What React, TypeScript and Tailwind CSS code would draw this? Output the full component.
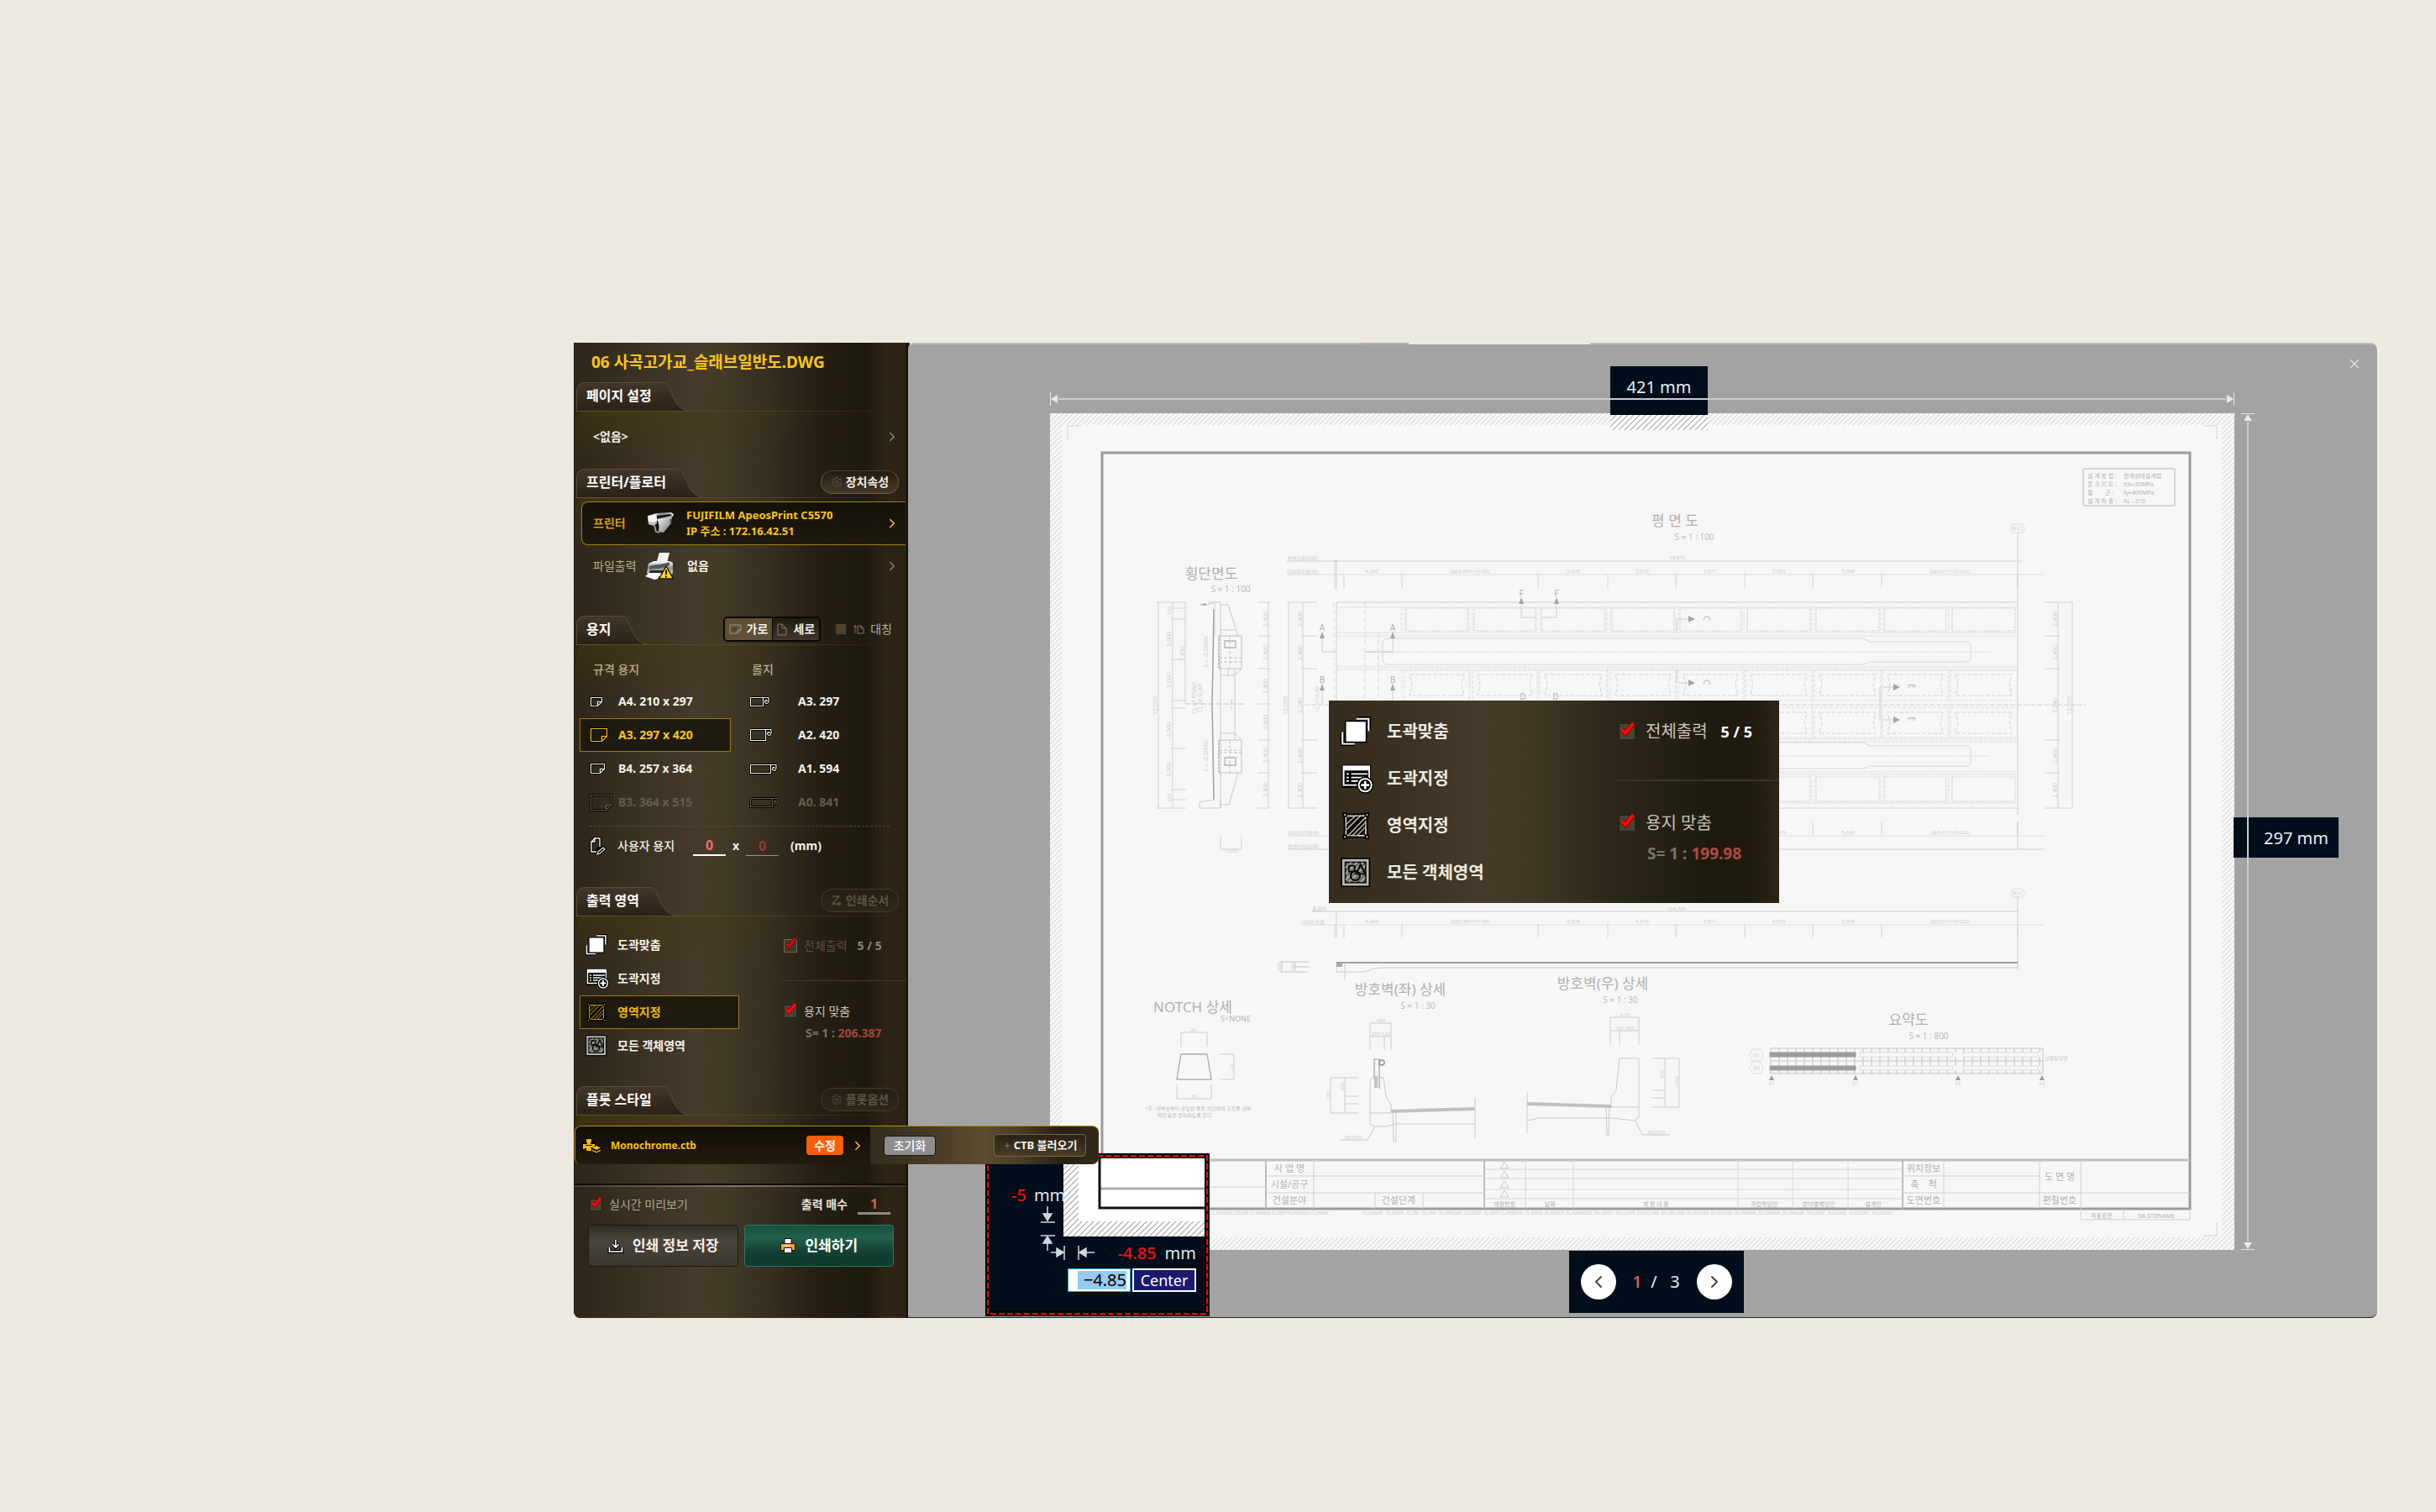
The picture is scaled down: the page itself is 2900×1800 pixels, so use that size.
import React, { useId, useState } from "react";
import { ChevronLeft, ChevronRight, Plus, Settings, X } from "lucide-react";

/* ------------------------------------------------------------------ */
/* Icons                                                               */
/* ------------------------------------------------------------------ */

function PaperIcon({ w, h }: { w: number; h: number }) {
  const f = h > 14 ? 6 : 5;
  const body = `M1.5 1.5H${w + 1.5}V${h + 1.5 - f}L${w + 1.5 - f} ${h + 1.5}H1.5Z`;
  const fold = `M${w + 1.5 - f} ${h + 1.5}V${h + 1.5 - f}H${w + 1.5}`;
  return (
    <svg width={w + 3} height={h + 3} viewBox={`0 0 ${w + 3} ${h + 3}`} fill="none" aria-hidden="true">
      <path d={body} stroke="#000" strokeWidth="3" />
      <path d={body + fold} stroke="currentColor" strokeWidth="1.2" />
    </svg>
  );
}

function RollIcon({ w, h }: { w: number; h: number }) {
  const outline = `M1.5 1.5H${w + 8}M1.5 1.5V${h + 1.5}H${w + 1.5}V1.5`;
  const curl = `M${w + 8} 1.5V5.500Q${w + 7.5} 8.500 ${w + 5.5} 8.500Q${w + 3.5} 8.200 ${w + 3.5} 6Q${w + 3.8} 4.200 ${w + 5.8} 4.500V6`;
  return (
    <svg width={w + 11} height={h + 3} viewBox={`0 0 ${w + 11} ${h + 3}`} fill="none" aria-hidden="true">
      <path d={outline + curl} stroke="#000" strokeWidth="3" />
      <path d={outline + curl} stroke="currentColor" strokeWidth="1.200" />
    </svg>
  );
}

function PlotterIcon() {
  return (
    <svg viewBox="0 0 34 28" className="h-7 w-[34px]" aria-hidden="true">
      <defs>
        <linearGradient id="plotPaper" x1="0" y1="0" x2="1" y2="1">
          <stop offset="0" stopColor="#fff" />
          <stop offset=".5" stopColor="#b8b8b8" />
          <stop offset="1" stopColor="#5d5d5d" />
        </linearGradient>
        <linearGradient id="plotBar" x1="0" y1="0" x2="1" y2="0">
          <stop offset="0" stopColor="#f4f4f4" />
          <stop offset=".5" stopColor="#8d8d8d" />
          <stop offset="1" stopColor="#e2e2e2" />
        </linearGradient>
      </defs>
      <path d="M11 24l14 1 7-7-3-3z" fill="#17130c" />
      <path d="M3 5l8-3 18-1 3 2-1 3-19 5-8-1z" fill="url(#plotBar)" />
      <path d="M11 5l16-2 3 1-3 3-15 3z" fill="#1c1c1c" />
      <path d="M12 9l18-4-1 9-9 11-6-1c1-5 1-10-2-15z" fill="url(#plotPaper)" />
      <path d="M1 5l9-2 2 3v7l-4 3-6-1z" fill="#f4f4f4" />
      <path d="M2 12l6 1 4-2v3l-4 3-6-2z" fill="#bdbdbd" />
      <path d="M9 16l2 8 4 1" fill="none" stroke="#a5a5a5" strokeWidth="1.600" />
      <path d="M28 9l1 6" fill="none" stroke="#4a4a4a" strokeWidth="1.400" />
    </svg>
  );
}

function FilePrinterIcon() {
  return (
    <svg viewBox="0 0 34 34" className="h-[34px] w-[34px]" aria-hidden="true">
      <defs>
        <linearGradient id="filePrinter" x1="0" y1="0" x2="0" y2="1">
          <stop offset="0" stopColor="#fff" />
          <stop offset=".45" stopColor="#8d9194" />
          <stop offset="1" stopColor="#e7e7e7" />
        </linearGradient>
      </defs>
      <path d="M17 1h12l-3 13H13z" fill="#f5f5f5" />
      <path d="M4 14l6-3h19l4 2v12l-4 4H6l-4-4z" fill="url(#filePrinter)" />
      <path d="M5 17c7-2 17-2 24-5v4c-7 4-17 4-24 5z" fill="#54595c" />
      <path d="M6 22h16v4H4z" fill="#2b2b2b" />
      <path d="M5 25h14l-4 7-4 1-11-4z" fill="#fbfbfb" />
      <path d="M25 17l8.500 15h-17z" fill="#ffd21f" stroke="#1b1500" strokeWidth="1.400" strokeLinejoin="round" />
      <path d="M25 21.500v5.500M25 28.600v1.800" stroke="#000" strokeWidth="1.800" />
    </svg>
  );
}

function LandscapeIcon() {
  return (
    <svg width="15" height="12" viewBox="0 0 15 12" fill="none" stroke="#a1957f" aria-hidden="true">
      <path d="M1 1h13v6l-4 4H1zM10 11V7h4" />
      <path d="M4 8l3-3 2 1" stroke="#2a2317" />
    </svg>
  );
}

function PortraitIcon() {
  return (
    <svg width="12" height="15" viewBox="0 0 12 15" fill="none" stroke="#8a806d" aria-hidden="true">
      <path d="M1 1h5l5 5v8H1zM6 1v5h5" />
    </svg>
  );
}

function MirrorIcon() {
  return (
    <svg width="14" height="14" viewBox="0 0 14 14" fill="none" stroke="#7d735f" aria-hidden="true">
      <path d="M5 3h4l3 3v6H5zM9 3v3h3M2 12V3M.5 4.500L2 2.500l1.500 2" />
    </svg>
  );
}

function CustomPaperIcon() {
  return (
    <svg width="20" height="22" viewBox="0 0 20 22" fill="none" aria-hidden="true">
      <path d="M6 2h6v10l-5 6H2V6zM6 2v4H2M10 19l6-6 2 2-6 5-3 1z" stroke="#000" strokeWidth="3.500" />
      <path d="M6 2h6v10M8 18H2V6l4-4v4H2" stroke="#f2f0ea" strokeWidth="1.400" />
      <path d="M10 18l6-5 2 2-6 5-3 1z" stroke="#f2f0ea" strokeWidth="1.200" />
    </svg>
  );
}

type ActionKind = "fit" | "pick" | "area" | "all";

function ActionIcon({ kind, className }: { kind: ActionKind; className: string }) {
  if (kind === "fit")
    return (
      <svg viewBox="0 0 28 26" className={className} fill="none" aria-hidden="true">
        <path d="M14 2h10v10M1.500 14v9.500H12" stroke="#000" strokeWidth="4" />
        <path d="M13.500 2H24v10.500M1.500 13.500v10H12" stroke="#fff" strokeWidth="1.500" />
        <path d="M4 4h18v18H4z" fill="#fff" stroke="#000" strokeWidth="1.200" />
      </svg>
    );
  if (kind === "pick")
    return (
      <svg viewBox="0 0 28 26" className={className} fill="none" aria-hidden="true">
        <path d="M1 1h25v20H1z" fill="#000" />
        <path d="M2.500 2.500h22v16h-22z" stroke="#fff" strokeWidth="1.400" />
        <path d="M2 2h23v4H2z" fill="#fff" />
        <path d="M5 9h2M9 9h14M5 12h2M9 12h12M5 15h2M9 15h6" stroke="#fff" strokeWidth="1.300" />
        <circle cx="21" cy="18.500" r="6.500" fill="#000" stroke="#000" strokeWidth="1.500" />
        <circle cx="21" cy="18.500" r="5.500" stroke="#fff" strokeWidth="1.400" />
        <path d="M21 15v7M17.500 18.500h7" stroke="#fff" strokeWidth="1.900" />
      </svg>
    );
  if (kind === "area")
    return (
      <svg viewBox="0 0 28 26" className={className} fill="none" aria-hidden="true">
        <path d="M4 4h18v18H4z" fill="#2b2417" stroke="#000" strokeWidth="3" />
        <path d="M5 12l8-8M4 20L20 4M8 22L22 8M14 22l8-8" stroke="#000" strokeWidth="3" />
        <path d="M4.500 5v7l8-7.500zM4.500 20.500V17L17 4.500h4.500v1L6.500 21.500zM21.500 21.500H14l7.500-7.500zM10 21.500L21.500 10" stroke="currentColor" strokeWidth="1" opacity=".8" />
        <path d="M4.500 4.500h17v17h-17z" stroke="currentColor" strokeWidth="1" strokeDasharray="6 1" opacity=".8" />
        <path d="M1.500 1.500h4v4h-4zM20.500 1.500h4v4h-4zM1.500 20.500h4v4h-4zM20.500 20.500h4v4h-4z" fill="#000" />
        <path d="M3 3h1.300v1.300H3zM22 3h1.300v1.300H22zM3 22h1.300v1.300H3zM22 22h1.300v1.300H22z" fill="currentColor" />
      </svg>
    );
  return (
    <svg viewBox="0 0 28 26" className={className} fill="none" aria-hidden="true">
      <rect x=".7" y=".7" width="24" height="24" fill="#b9b9b4" stroke="#000" strokeWidth="1.200" />
      <rect x="4" y="4" width="17.400" height="17.400" fill="#77756e" stroke="#111" strokeWidth="1.400" />
      <path d="M4 9l5-5M4 14L14 4M4 19L19 4M7 21L21 7M12 21l9-9M17 21l4-4" stroke="#cfcfc8" strokeWidth=".8" />
      <path d="M7 7h5v5H7z" stroke="#000" strokeWidth="1.300" />
      <circle cx="12.500" cy="15.500" r="4" stroke="#000" strokeWidth="1.500" />
      <path d="M17 6l4 8h-8z" stroke="#000" strokeWidth="1.400" />
    </svg>
  );
}

function StylePrinterIcon() {
  return (
    <svg width="24" height="20" viewBox="0 0 24 20" fill="#f3bd0c" aria-hidden="true">
      <path d="M5 2h6v5h4v6H11v2H5v-1H1V7h4z" stroke="#000" strokeWidth="2" />
      <path d="M5 2h6v4H5zM1 8h14v4H1zM1 12h2v2H1zM5 13h6v3H5z" />
      <path d="M4 9.500h8" stroke="#1a150a" />
      <path d="M17 9.500l6 3-1 3-5 3-5.500-3-.5-3z" fill="#000" />
      <path d="M17 10l5 2.500-5 2.500-5-2.500z" />
      <path d="M12 14.500l5 2.500 5-2.500v1.500L17 18.500 12 16z" />
    </svg>
  );
}

function SaveIcon() {
  return (
    <svg width="20" height="20" viewBox="0 0 20 20" fill="none" aria-hidden="true">
      <path d="M10 3v8M6.500 8.500L10 12l3.500-3.500M2.500 12v5h15v-5" stroke="#000" strokeWidth="4" />
      <path d="M10 3v8M6.500 8.500L10 12l3.500-3.500M2.500 12v5h15v-5" stroke="#fff" strokeWidth="1.600" />
    </svg>
  );
}

function PrintIcon() {
  return (
    <svg width="20" height="20" viewBox="0 0 20 20" stroke="#1b1408" aria-hidden="true">
      <path d="M6 1.500h8V8H6z" fill="#fff" />
      <path d="M1.500 7.500h17v8h-17z" fill="#eca23a" />
      <path d="M5.500 12.500h9v6h-9z" fill="#fff" />
      <path d="M5 10h7" stroke="#fff0c8" />
    </svg>
  );
}

/* ------------------------------------------------------------------ */
/* Small controls                                                      */
/* ------------------------------------------------------------------ */

function CheckField({
  label,
  boxClass,
  textClass,
  dim = false,
  initial = true,
}: {
  label: React.ReactNode;
  boxClass: string;
  textClass: string;
  dim?: boolean;
  initial?: boolean;
}) {
  const id = useId();
  const [on, setOn] = useState(initial);
  return (
    <div className={dim ? "flex items-center opacity-70" : "flex items-center"}>
      <span className={"relative mr-2 block " + boxClass}>
        <input
          id={id}
          type="checkbox"
          checked={on}
          onChange={(e) => setOn(e.target.checked)}
          className={"block h-full w-full appearance-none border bg-[#4b4330] " + (dim ? "border-[#8b8577]" : "border-[#15291f]")}
        />
        {on && (
          <svg viewBox="0 0 20 20" className="pointer-events-none absolute -top-1 left-0 h-full w-full overflow-visible" fill="none" aria-hidden="true">
            <path d="M3.500 11.500L8 16 17.500 4" stroke="#7d0505" strokeWidth="6" />
            <path d="M3.500 11.500L8 16 17.500 4" stroke="#f50d0d" strokeWidth="3.800" />
          </svg>
        )}
      </span>
      <label htmlFor={id} className={textClass}>
        {label}
      </label>
    </div>
  );
}

function PillButton({ children, icon, disabled = false }: { children: React.ReactNode; icon: React.ReactNode; disabled?: boolean }) {
  return (
    <button
      type="button"
      disabled={disabled}
      className="flex h-7 w-[93px] items-center justify-center gap-1 rounded-[14px] border border-[#6b5b35] border-t-[#4b4026] bg-linear-to-b from-[#221c11] to-[#46392a] text-sm font-bold text-[#efece4] disabled:border-[#453a24] disabled:from-[#241e13] disabled:to-[#2f2718] disabled:text-[#5d5443]"
    >
      {icon}
      {children}
    </button>
  );
}

function Section({
  title,
  extra,
  panelClass,
  children,
}: {
  title: string;
  extra?: React.ReactNode;
  panelClass: string;
  children?: React.ReactNode;
}) {
  return (
    <section className="pl-[3px]">
      <header className="flex h-[34px] items-stretch">
        <h2 className="flex items-center rounded-tl-[10px] border-t border-l border-[#5b4c33] bg-linear-to-b from-[#43372a] to-[#2a2216] pb-[3px] pl-[11px] text-base leading-5 font-bold text-white">
          {title}
        </h2>
        <svg width="44" height="34" viewBox="0 0 44 34" fill="none" aria-hidden="true">
          <defs>
            <linearGradient id="tabEnd" x1="0" y1="0" x2="0" y2="1">
              <stop offset="0" stopColor="#43372a" />
              <stop offset="1" stopColor="#2a2216" />
            </linearGradient>
          </defs>
          <path d="M0 .5H12C20 .5 21 7 24 14c4 10 9 19 20 20H0Z" fill="url(#tabEnd)" />
          <path d="M0 .5H12C20 .5 21 7 24 14c4 10 9 19 20 20" stroke="#5b4c33" />
        </svg>
        <div className="flex flex-1 items-center justify-end pr-[9px] pb-[2px]">{extra}</div>
      </header>
      <div className="h-px w-full bg-linear-to-r from-[#6b5322] via-[#54431f] to-transparent" />
      <div className={"rounded-tl-[10px] bg-[radial-gradient(ellipse_280px_60px_at_20px_0px,#4a380f80,transparent)] " + panelClass}>{children}</div>
    </section>
  );
}

const ACTIONS: { kind: ActionKind; label: string }[] = [
  { kind: "fit", label: "도곽맞춤" },
  { kind: "pick", label: "도곽지정" },
  { kind: "area", label: "영역지정" },
  { kind: "all", label: "모든 객체영역" },
];

const SHEETS = [
  { label: "A4. 210 x 297", w: 13, h: 10 },
  { label: "A3. 297 x 420", w: 19, h: 15 },
  { label: "B4. 257 x 364", w: 16, h: 11 },
  { label: "B3. 364 x 515", w: 24, h: 18, off: true },
];

const ROLLS = [
  { label: "A3. 297", w: 15, h: 10 },
  { label: "A2. 420", w: 18, h: 13 },
  { label: "A1. 594", w: 24, h: 10 },
  { label: "A0. 841", w: 26, h: 10, off: true },
];

function Sidebar() {
  return (
    <aside className="relative z-20 w-[398px] shrink-0 rounded-bl-lg border-r-2 border-[#120e06] bg-[linear-gradient(90deg,#2d2619_0%,#372f20_15%,#453b2a_36%,#433a27_44%,#373020_58%,#241e13_74%,#1f1a0f_88%,#2e2416_94%,#2b2214_100%)]">
      <h1 className="h-[47px] pl-[21px] text-[19px] leading-[46px] font-bold text-[#fac417]">06 사곡고가교_슬래브일반도.DWG</h1>

      <Section title="페이지 설정" panelClass="h-[68px] pt-[10px]">
        <button type="button" className="flex h-10 w-full items-center justify-between pr-2 pl-5 text-sm font-bold text-[#f1eee6]">
          &lt;없음&gt;
          <ChevronRight className="h-[18px] w-[18px] text-[#8f8878]" />
        </button>
      </Section>

      <Section
        title="프린터/플로터"
        panelClass="h-[140px] pt-1"
        extra={<PillButton icon={<Settings className="h-[14px] w-[14px] text-[#7b715e]" strokeWidth={1} />}>장치속성</PillButton>}
      >
        <button
          type="button"
          className="ml-[6px] flex h-[52px] w-[386px] items-center rounded-l-lg border border-r-0 border-[#a17c16] bg-linear-to-b from-[#14110a] via-[#1a150c] to-[#1f190e] pr-[7px] pl-[13px] text-left font-bold"
        >
          <span className="w-[60px] text-sm text-[#d49c10]">프린터</span>
          <span className="w-[51px] pl-1">
            <PlotterIcon />
          </span>
          <span className="flex-1 text-[13px] leading-[19px] text-[#fbc414]">
            FUJIFILM ApeosPrint C5570
            <br />
            IP 주소 : 172.16.42.51
          </span>
          <ChevronRight className="h-[18px] w-[18px] text-[#fbc414]" />
        </button>
        <button type="button" className="flex h-[50px] w-full items-center pr-2 pl-5 text-left text-sm">
          <span className="w-[62px] text-[#b9ad8c]">파일출력</span>
          <span className="w-[50px]">
            <FilePrinterIcon />
          </span>
          <span className="flex-1 font-bold text-[#f1eee6]">없음</span>
          <ChevronRight className="h-[18px] w-[18px] text-[#8f8878]" />
        </button>
      </Section>

      <Section
        title="용지"
        panelClass="h-[288px] pt-[18px] pl-1"
        extra={
          <div className="flex items-center pr-2">
            <div className="flex h-[30px] w-[116px] overflow-hidden rounded-[5px] border-2 border-[#0a0804] text-sm font-bold text-[#f1eee6]">
              <button type="button" className="flex flex-1 items-center justify-center gap-[6px] border-r border-[#0a0804] bg-[#5f4f39]">
                <LandscapeIcon />
                가로
              </button>
              <button type="button" className="flex flex-1 items-center justify-center gap-2 bg-linear-to-b from-[#221c11] to-[#41362a]">
                <PortraitIcon />
                세로
              </button>
            </div>
            <div className="pl-[17px]">
              <CheckField
                initial={false}
                boxClass="h-[14px] w-[14px]"
                textClass="flex items-center gap-[6px] text-sm text-[#b7b0a2]"
                label={
                  <>
                    <MirrorIcon />
                    대칭
                  </>
                }
              />
            </div>
          </div>
        }
      >
        <div className="flex gap-[22px]">
          <div className="w-[180px]">
            <h3 className="mb-[7px] pl-4 text-sm leading-[22px] font-medium text-[#b9ad8c]">규격 용지</h3>
            {SHEETS.map((s, i) => (
              <button
                key={s.label}
                type="button"
                disabled={s.off}
                aria-pressed={i === 1}
                className={
                  "flex h-10 w-full items-center border pl-[11px] text-sm font-bold " +
                  (i === 1 ? "border-[#9a7717] bg-[#1f1a10] text-[#fbc414]" : s.off ? "border-transparent text-[#655d4c]" : "border-transparent text-[#f4f1ea]")
                }
              >
                <span className="w-[34px]">
                  <PaperIcon w={s.w} h={s.h} />
                </span>
                {s.label}
              </button>
            ))}
          </div>
          <div className="flex-1">
            <h3 className="mb-[7px] pl-[3px] text-sm leading-[22px] font-medium text-[#b9ad8c]">롤지</h3>
            {ROLLS.map((s) => (
              <button
                key={s.label}
                type="button"
                disabled={s.off}
                className={"flex h-10 items-center text-sm font-bold " + (s.off ? "text-[#655d4c]" : "text-[#f4f1ea]")}
              >
                <span className="w-[58px]">
                  <RollIcon w={s.w} h={s.h} />
                </span>
                {s.label}
              </button>
            ))}
          </div>
        </div>
        <div className="mt-2 mr-5 ml-3 border-t border-dashed border-[#544a35]" />
        <div className="mt-[9px] flex h-7 items-center pl-3 text-sm font-bold text-[#f1eee6]">
          <CustomPaperIcon />
          <label htmlFor="custom-w" className="w-[103px] pl-[13px] font-medium whitespace-nowrap">
            사용자 용지
          </label>
          <input id="custom-w" defaultValue="0" className="h-6 w-[39px] border-b-2 border-white bg-transparent text-center text-base font-bold text-[#ee6a66]" />
          <label htmlFor="custom-h" className="px-2">
            x
          </label>
          <input id="custom-h" defaultValue="0" className="h-6 w-[39px] border-b border-[#9b9484] bg-transparent text-center text-base font-bold text-[#8f3f38]" />
          <span className="pl-[14px]">(mm)</span>
        </div>
      </Section>

      <Section
        title="출력 영역"
        panelClass="flex h-[202px] pt-[14px] pl-1"
        extra={
          <PillButton
            disabled
            icon={
              <svg width="14" height="14" viewBox="0 0 14 14" fill="none" stroke="currentColor" strokeWidth="1.300" aria-hidden="true">
                <path d="M2 2h8L2 11h9M9 9l3 2-3 2" />
              </svg>
            }
          >
            인쇄순서
          </PillButton>
        }
      >
        <div className="w-[190px]">
          {ACTIONS.map((a, i) => (
            <button
              key={a.kind}
              type="button"
              aria-pressed={i === 2}
              className={
                "flex h-10 w-full items-center gap-[10px] border pl-[6px] text-sm font-bold " +
                (i === 2 ? "border-[#9a7717] bg-[#1f1a10] text-[#f0b913]" : "border-transparent text-[#f4f1ea]")
              }
            >
              <ActionIcon kind={a.kind} className="h-[26px] w-7" />
              {a.label}
            </button>
          ))}
        </div>
        <div className="ml-[50px] flex-1 text-sm">
          <div className="flex h-[42px] items-center gap-3 pl-[3px]">
            <CheckField dim boxClass="h-4 w-4" textClass="text-[#6e6655]" label="전체출력" />
            <span className="font-bold text-[#8b8577]">5 / 5</span>
          </div>
          <div className="mt-5 h-px bg-[#42392a]" />
          <div className="mt-4 flex h-10 items-center pl-[3px]">
            <CheckField boxClass="h-4 w-4" textClass="text-[#c9c4b8]" label="용지 맞춤" />
          </div>
          <p className="pl-[29px] leading-3 font-bold whitespace-pre text-[#7a7466]">
            S= 1 :{" "}
            <span className="text-[#a3453e]">206.387</span>
          </p>
        </div>
      </Section>

      <Section
        title="플롯 스타일"
        panelClass="h-3"
        extra={
          <PillButton disabled icon={<Settings className="h-[14px] w-[14px]" strokeWidth={1.3} />}>
            플롯옵션
          </PillButton>
        }
      />

      <div className="ml-px flex h-[46px] w-[624px] overflow-hidden rounded-lg border-t border-l border-[#b48c12] bg-[linear-gradient(90deg,#332b1c_55%,#3c3322_62%,#5c4b2f_78%,#4a3e29_85%,#261f13_93%,#33291b_99%)]">
        <div className="flex w-[351px] items-center bg-linear-to-b from-[#120e07] to-[#211a0e] pl-2">
          <StylePrinterIcon />
          <span className="flex-1 pl-[10px] text-xs font-bold text-[#f6bf11]">Monochrome.ctb</span>
          <button type="button" className="h-[23px] w-11 rounded-sm bg-[#ff5d07] text-sm leading-[22px] font-bold text-white">
            수정
          </button>
          <button type="button" aria-label="펼치기" className="mr-[6px] ml-2">
            <ChevronRight className="h-[18px] w-[18px] text-[#fbc414]" />
          </button>
        </div>
        <div className="flex flex-1 items-center justify-between pr-[15px] pl-4">
          <button type="button" className="h-6 w-[62px] rounded-sm border border-[#1a150c] bg-[#8e8e8e] text-sm leading-5 font-medium text-white">
            초기화
          </button>
          <button
            type="button"
            className="flex h-[27px] w-[110px] items-center justify-center gap-[3px] rounded-sm border border-[#7a6843] bg-linear-to-b from-[#2a2216] to-[#4a3c26] text-[13px] font-bold whitespace-nowrap text-[#f4f1ea]"
          >
            <Plus className="h-[10px] w-[10px] text-[#8f8878]" />
            CTB 불러오기
          </button>
        </div>
      </div>

      <div className="mt-[23px] h-[2px] bg-[#0f0b06]" />
      <div className="h-[2px] bg-linear-to-r from-[#4b3f2b] via-[#8c7657] to-[#3b3020]" />

      <div className="flex h-[42px] items-center justify-between pr-[19px] pl-[19px] text-sm">
        <CheckField boxClass="h-[15px] w-[15px]" textClass="text-[#aba595]" label="실시간 미리보기" />
        <div className="flex items-center gap-3">
          <label htmlFor="copies" className="font-bold text-[#e8e4da]">
            출력 매수
          </label>
          <input id="copies" defaultValue="1" className="h-6 w-[39px] border-b-[3px] border-[#8e8a82] bg-transparent text-center text-base font-bold text-[#d9605a]" />
        </div>
      </div>

      <div className="flex gap-[7px] pt-[3px] pr-[15px] pb-[61px] pl-[17px] text-[17px] font-bold text-white">
        <button type="button" className="flex h-[50px] flex-1 items-center justify-center gap-[10px] rounded-sm border border-[#1d180f] bg-[linear-gradient(180deg,#312d26_0%,#4a453c_35%,#3d382f_100%)] text-[#f1eee6]">
          <SaveIcon />
          인쇄 정보 저장
        </button>
        <button type="button" className="flex h-[50px] flex-1 items-center justify-center gap-[10px] rounded-sm border border-[#2a7a60] bg-[linear-gradient(180deg,#165040_0%,#22604c_30%,#134034_65%,#0f3a2e_100%)]">
          <PrintIcon />
          인쇄하기
        </button>
      </div>
    </aside>
  );
}

/* ------------------------------------------------------------------ */
/* Drawing sheet                                                       */
/* ------------------------------------------------------------------ */

const BAYS = [1591, 1669, 1750, 1831, 1914, 1995, 2077, 2158, 2240, 2321, 2402];
const TICKS = [1600, 1669, 1831, 1914, 1995, 2077, 2158, 2240, 2402];
const CELLS = [
  [1674, 1747], [1755, 1828], [1835, 1911], [1919, 1993], [2000, 2073], [2080, 2155], [2162, 2237], [2243, 2317], [2324, 2399],
];
const SPANS: [number, string][] = [
  [1633, "4,260"], [1750, "2@5,000=10,000"], [1873, "5,008"], [1955, "5,010"], [2036, "5,011"], [2118, "5,005"], [2200, "5,009"], [2321, "2@5,011=10,022"],
];
const LEVELS = [717, 757, 796, 881, 920, 962];

function T({ x, y, s = 7, c = "#cacaca", a = "middle", children }: { x: number; y: number; s?: number; c?: string; a?: "start" | "middle" | "end"; children: React.ReactNode }) {
  return (
    <text x={x} y={y + s * 0.36} fontSize={s} fill={c} textAnchor={a} xmlSpace="preserve">
      {children}
    </text>
  );
}

function V({ x, y, s = 7, children }: { x: number; y: number; s?: number; children: React.ReactNode }) {
  return (
    <text transform={`translate(${x} ${y}) rotate(-90)`} fontSize={s} fill="#cdcdcd" textAnchor="middle">
      {children}
    </text>
  );
}

function Hexagon({ x, y, w, h }: { x: number; y: number; w: number; h: number }) {
  return <path d={`M${x - w} ${y}l${w / 2.5} ${-h}h${w * 1.2}l${w / 2.5} ${h}l${-w / 2.5} ${h}h${-w * 1.2}Z`} />;
}

function SpanRow({ y, x0, x1 = 2434, tick }: { y: number; x0: number; x1?: number; tick: number }) {
  return (
    <g>
      <path d={`M${x0} ${y}H${x1}`} stroke="#dedede" />
      {TICKS.map((x) => (
        <path key={x} d={`M${x} ${y - 1}v${tick}`} stroke="#d4d4d4" />
      ))}
      {SPANS.map(([x, t]) => (
        <T key={x} x={x} y={y - 4} s={6}>
          {t}
        </T>
      ))}
    </g>
  );
}

function Marker({ x, y, t }: { x: number; y: number; t: string }) {
  return (
    <g>
      <T x={x} y={y - 9} s={10} c="#b0b0b0">
        {t}
      </T>
      <path d={`M${x} ${y - 4}l3 8h-6z`} fill="#a5a5a5" stroke="none" />
      <path d={`M${x} ${y + 4}V${y + 20}`} stroke="#d0d0d0" />
    </g>
  );
}

function SideMarker({ x, y, t }: { x: number; y: number; t: string }) {
  return (
    <g>
      <path d={`M${x - 20} ${y}h12`} stroke="#cacaca" />
      <path d={`M${x - 8} ${y - 4}l8 4-8 4z`} fill="#a5a5a5" stroke="none" />
      <text transform={`translate(${x + 10} ${y - 4}) rotate(90)`} fontSize={10} fill="#b5b5b5">
        {t}
      </text>
    </g>
  );
}

function Sheet() {
  return (
    <svg
      viewBox="1250 492 1410 996"
      className="block w-full bg-[#f7f7f7]"
      fontFamily='"Noto Sans","Noto Sans CJK KR",sans-serif'
      fill="none"
      stroke="#dcdcdc"
      role="img"
      aria-label="슬래브일반도"
    >
      <style>{"text{stroke:none}"}</style>
      <defs>
        <pattern id="sheetHatch" width="6" height="6" patternUnits="userSpaceOnUse">
          <path d="M-1 7L7 -1M-1 1L1 -1M5 7L7 5" stroke="#d0d0d0" strokeWidth="1" />
        </pattern>
      </defs>
      <path d="M1250 492H2660V1488H1250ZM1264 506V1473H2645V506Z" fill="url(#sheetHatch)" fillRule="evenodd" stroke="none" />
      <path d="M1271 523V507H1287M2623 507H2639V523M2639 1455V1471H2623" stroke="#d4d4d4" />
      <rect x="1312" y="539" width="1295" height="900" stroke="#9b9b9b" strokeWidth="3" />

      {/* design notes */}
      <rect x="2480" y="558" width="109" height="44" rx="2" stroke="#cbcbcb" strokeWidth="1.500" />
      {[
        ["설 계 방 법 :", "한계상태설계법"],
        ["콘 크 리 트 :", "fck=35MPa"],
        ["철        근 :", "fy=400MPa"],
        ["설 계 하 중 :", "KL - 510"],
      ].map(([k, v], i) => (
        <g key={k}>
          <T x={2485} y={566 + i * 10} s={7} c="#b3b3b3" a="start">
            {k}
          </T>
          <T x={2528} y={566 + i * 10} s={7} c="#b3b3b3" a="start">
            {v}
          </T>
        </g>
      ))}

      <T x={1994} y={620} s={17} c="#b0b0b0">평 면 도</T>
      <T x={2017} y={639} s={10} c="#bcbcbc">S = 1 : 100</T>
      <T x={1442} y={683} s={17} c="#b0b0b0">횡단면도</T>
      <T x={1465} y={701} s={10} c="#bcbcbc">S = 1 : 100</T>

      {/* cross section */}
      <path d="M1379 717V962M1396 717V962M1411 717V838M1510 717V962M1376 717H1412M1376 962H1412M1497 717H1512M1497 962H1512" stroke="#d2d2d2" />
      {[724, 737, 785, 834, 843, 891, 940, 952].map((y) => (
        <path key={y} d={`M1394 ${y}h18`} stroke="#d4d4d4" />
      ))}
      {LEVELS.slice(1, 5).concat(838).map((y) => (
        <path key={y} d={`M1497 ${y}h15`} stroke="#d4d4d4" />
      ))}
      <V x={1378} y={840}>15,070</V>
      <V x={1394} y={761}>3,000</V>
      <V x={1394} y={810}>3,000</V>
      <V x={1394} y={869}>3,000</V>
      <V x={1394} y={916}>3,000</V>
      <V x={1410} y={778}>7,450</V>
      <V x={1394} y={727} s={6}>750</V>
      <V x={1394} y={950} s={6}>750</V>
      <V x={1438} y={776}>S = -2.000%</V>
      <V x={1438} y={900}>S = -2.000%</V>
      <V x={1424} y={831}>CL of ROAD</V>
      <V x={1431} y={831}>CL of SLAB</V>
      {[737, 777, 817, 860, 899, 940].map((y) => (
        <V key={y} x={1509} y={y}>2,400</V>
      ))}
      <path d="M1445 725L1444 790 1443 838 1444 890 1445 952" stroke="#9f9f9f" strokeWidth="1.500" />
      <path d="M1438 717h15M1437 720l8-2M1453 717V962M1446 717V757M1453 720H1462L1474 757M1453 750h17M1470 796V881M1462 796V804M1453 804H1470L1478 796M1453 873H1470L1478 881M1474 920L1463 958H1453M1428 962H1453V952M1428 962V955L1445 952" stroke="#c9c9c9" />
      <path d="M1451 757H1478V796H1451ZM1451 881H1478V920H1451Z" stroke="#c0c0c0" />
      <path d="M1451 783H1478M1451 788H1478M1451 893H1478M1451 896H1478M1464 757V796M1464 881V920" stroke="#c3c3c3" strokeDasharray="4 2" />
      <path d="M1458 763H1471V771H1458ZM1458 902H1471V911H1458Z" stroke="#b4b4b4" strokeWidth="1.400" />
      <path d="M1451 757V796M1451 881V920" stroke="#a0a0a0" strokeDasharray="2 2" />
      <path d="M1411 838H1482M1466 832v12" stroke="#c6c6c6" strokeDasharray="7 2" />
      <path d="M1427 720l9-2v3z" fill="#a8a8a8" stroke="none" />
      <path d="M1453 995V1011H1478V995" stroke="#cfcfcf" />
      <T x={1466} y={1013} s={6}>1,500</T>

      {/* plan: upper dimension strings */}
      <T x={1532} y={665} s={6} a="start">슬래브길이[좌]</T>
      <T x={1532} y={681} s={6} a="start">다이아프램[좌]</T>
      <path d="M1532 668H2408" stroke="#d2d2d2" />
      <T x={1997} y={664} s={6}>49,870</T>
      <SpanRow y={684} x0={1532} tick={17} />
      <path d="M1589 666v35M1591 666v35" stroke="#cfcfcf" />
      <Hexagon x={2402} y={629} w={9} h={5} />
      <T x={2402} y={629} s={6}>M.L1</T>
      <path d="M2402 634V970" stroke="#cfcfcf" />

      {/* plan: side dimension strings */}
      <path d="M1534 717V962M1551 717V962M2450 717V962M2467 717V962" stroke="#d0d0d0" />
      {LEVELS.map((y) => (
        <path key={y} d={`M${y === 717 || y === 962 ? 1532 : 1549} ${y}H1568M2434 ${y}H${y === 717 || y === 962 ? 2468 : 2452}`} stroke="#d0d0d0" />
      ))}
      <V x={1533} y={840}>15,070</V>
      <V x={1550} y={840}>5,240</V>
      <V x={2449} y={840}>5,240</V>
      <V x={2466} y={840}>15,070</V>
      {[737, 777, 900, 941].map((y) => (
        <g key={y}>
          <V x={1550} y={y}>2,400</V>
          <V x={2449} y={y}>2,400</V>
        </g>
      ))}
      <V x={1570} y={832} s={6}>CL of SLAB</V>

      {/* plan body */}
      <path d="M1591 717H2402M1591 962H2402M1591 717V962" stroke="#d0d0d0" />
      <path d="M1588 717V962M1625 717V962M1641 753V925" stroke="#d8d8d8" strokeDasharray="6 3" />
      <path d="M1591 723H2402M1591 753H2402M1591 757H2402M1591 794H2402M1591 797H2402M1591 880H2402M1591 883H2402M1591 919H2402M1591 922H2402M1591 956H2402" stroke="#d7d7d7" strokeDasharray="2 1" />
      {CELLS.map(([a, b]) => (
        <g key={a} stroke="#d3d3d3">
          <rect x={a} y={724} width={b - a} height={27} strokeDasharray="3 1" />
          <rect x={a} y={925} width={b - a} height={29} strokeDasharray="3 1" />
          <rect x={a - 2} y={798} width={b - a + 4} height={36} strokeDasharray="4 2" stroke="#dedede" />
          <rect x={a - 2} y={842} width={b - a + 4} height={36} strokeDasharray="4 2" stroke="#dedede" />
          <path d={`M${a + 4} 803H${b - 4}L${b - 7} 815L${b - 4} 828H${a + 4}L${a + 7} 815Z`} strokeDasharray="5 2" />
          <path d={`M${a + 4} 848H${b - 4}L${b - 7} 860L${b - 4} 873H${a + 4}L${a + 7} 860Z`} strokeDasharray="5 2" />
        </g>
      ))}
      {BAYS.slice(1, 10).map((x) => (
        <path key={x} d={`M${x - 1} 723V753M${x + 3} 723V753M${x} 797V880M${x - 1} 922V956M${x + 3} 922V956`} stroke="#e0e0e0" strokeDasharray="4 2" />
      ))}
      <path d="M1652 760H2218L2226 764H2340Q2346 764 2346 770V782Q2346 788 2340 788H2226L2218 791H1652Q1646 791 1646 785V766Q1646 760 1652 760Z" stroke="#d6d6d6" />
      <path d="M1652 884H2218L2226 888H2340Q2346 888 2346 894V906Q2346 912 2340 912H2226L2218 915H1652Q1646 915 1646 909V890Q1646 884 1652 884Z" stroke="#d6d6d6" />
      <path d="M1625 776H2370M1625 900H2370" stroke="#d8d8d8" strokeDasharray="3 1" />
      <path d="M1553 839H2483" stroke="#cecece" strokeDasharray="6 2" />
      <path d="M1574 776H1590M1658 776H1625" stroke="#cacaca" />
      <Marker x={1574} y={756} t="A" />
      <Marker x={1658} y={756} t="A" />
      <Marker x={1574} y={818} t="B" />
      <Marker x={1658} y={818} t="B" />
      <Marker x={1811} y={715} t="F" />
      <Marker x={1853} y={715} t="F" />
      <path d="M1811 735H1828M1853 735H1836" stroke="#cacaca" />
      <T x={1813} y={829} s={10} c="#b0b0b0">D</T>
      <T x={1852} y={829} s={10} c="#b0b0b0">D</T>
      <SideMarker x={2018} y={737} t="C" />
      <SideMarker x={2018} y={813} t="C" />
      <path d="M1996 737V753M1996 797V813M2238 818V857" stroke="#cacaca" />
      <SideMarker x={2262} y={818} t="E" />
      <SideMarker x={2262} y={857} t="E" />

      {/* plan: lower dimension strings */}
      <T x={1533} y={992} s={6} a="start">다이아프램[우]</T>
      <T x={1533} y={1008} s={6} a="start">슬래브길이[우]</T>
      <SpanRow y={995} x0={1533} tick={-16} />
      <path d="M1533 1011H2434M2402 978V1011" stroke="#cfcfcf" />
      <Hexagon x={2402} y={1063} w={9} h={5} />
      <T x={2402} y={1063} s={6}>M.L1</T>
      <path d="M2402 1068V1155" stroke="#cfcfcf" />
      <T x={1562} y={1082} s={6} a="start">총길이</T>
      <path d="M1561 1085H2402" stroke="#cbcbcb" />
      <T x={1996} y={1082} s={6}>159,780</T>
      <T x={1549} y={1098} s={6} a="start">다이어프램</T>
      <SpanRow y={1101} x0={1549} tick={17} />
      <path d="M1589 1100v17M1591 1085v32" stroke="#cfcfcf" />

      {/* elevation */}
      <path d="M1591 1146H2402" stroke="#a0a0a0" strokeWidth="1.800" />
      <path d="M1591 1146V1157H1625L1635 1153 1648 1152H2402M1601 1146V1166" stroke="#c8c8c8" />
      <path d="M1591 1147h7v4h-7z" fill="#aaa" stroke="none" />
      <path d="M1526 1145V1157M1542 1145V1157M1524 1145H1558M1524 1157H1558M1540 1151H1558" stroke="#c6c6c6" />
      <V x={1525} y={1151} s={6}>900</V>
      <V x={1541} y={1151} s={6}>350</V>

      {/* notch detail */}
      <T x={1420} y={1199} s={17} c="#b0b0b0">NOTCH 상세</T>
      <T x={1471} y={1213} s={9} c="#b5b5b5">S=NONE</T>
      <path d="M1406 1246V1229H1437V1246M1401 1291V1308H1442V1291M1452 1255H1469V1285H1452" stroke="#cccccc" />
      <path d="M1406 1255H1437L1442 1285H1401Z" stroke="#b0b0b0" strokeWidth="1.400" />
      <T x={1421} y={1226} s={6}>20</T>
      <T x={1421} y={1305} s={6}>30</T>
      <V x={1468} y={1270} s={6}>20</V>
      <T x={1363} y={1320} s={6} c="#bdbdbd" a="start">*주 : 외부로부터 유입된 물을 차단하여 구조물 내부</T>
      <T x={1377} y={1328} s={6} c="#bdbdbd" a="start">백대 등을 방지하도록 한다.</T>

      {/* left barrier */}
      <T x={1667} y={1178} s={17} c="#b0b0b0">방호벽(좌) 상세</T>
      <T x={1688} y={1197} s={10} c="#bcbcbc">S = 1 : 30</T>
      <path d="M1631 1250V1218H1656V1250M1631 1234H1656M1648 1234v16M1617 1283H1584V1325H1617M1601 1283V1325M1601 1305h16M1601 1314h16" stroke="#cccccc" />
      <T x={1644} y={1215} s={6}>440</T>
      <T x={1644} y={1231} s={6}>250 120</T>
      <V x={1583} y={1304} s={6}>750</V>
      <V x={1600} y={1294} s={6}>400</V>
      <path d="M1636 1284V1261H1642V1296M1639 1281V1295M1637 1281V1295" stroke="#9d9d9d" strokeWidth="1.200" />
      <circle cx="1645" cy="1265" r="3" stroke="#8f8f8f" strokeWidth="1.500" />
      <path d="M1631 1325V1286Q1632 1283 1636 1283H1647L1650 1305 1656 1315V1325M1631 1325H1656M1631 1325V1338L1636 1341H1650L1662 1338H1755M1756 1307V1355M1658 1325L1659 1359H1662V1325" stroke="#c9c9c9" />
      <path d="M1656 1323L1755 1320" stroke="#c0c0c0" strokeWidth="4" />
      <path d="M1637 1341L1628 1357H1595" stroke="#c6c6c6" />
      <T x={1611} y={1354} s={6}>NOTCH</T>

      {/* right barrier */}
      <T x={1908} y={1171} s={17} c="#b0b0b0">방호벽(우) 상세</T>
      <T x={1929} y={1190} s={10} c="#bcbcbc">S = 1 : 30</T>
      <path d="M1917 1244V1211H1951V1244M1917 1227H1951M1928 1227v17M1966 1260H1999V1318H1966M1982 1260V1318M1966 1298h16M1966 1307h16" stroke="#cccccc" />
      <T x={1934} y={1208} s={6}>610</T>
      <T x={1934} y={1224} s={6}>120 420</T>
      <V x={1998} y={1289} s={6}>1,060</V>
      <V x={1981} y={1279} s={6}>700</V>
      <path d="M1928 1260H1951V1330L1946 1334 1918 1331H1832L1818 1334M1928 1260L1924 1298 1918 1306V1318H1951M1818 1300V1349M1912 1318L1913 1352H1915L1916 1318" stroke="#c9c9c9" />
      <path d="M1818 1314L1918 1317" stroke="#c0c0c0" strokeWidth="4" />
      <path d="M1947 1334L1955 1351H1988" stroke="#c6c6c6" />
      <T x={1972} y={1348} s={6}>NOTCH</T>

      {/* key plan */}
      <T x={2272} y={1214} s={17} c="#b0b0b0">요약도</T>
      <T x={2296} y={1233} s={10} c="#bcbcbc">S = 1 : 800</T>
      <path d="M2108 1248H2432V1278H2108ZM2108 1263H2432" stroke="#c3c3c3" />
      {Array.from({ length: 32 }, (_, i) => (
        <path key={i} d={`M${2118 + i * 10} 1248V1253M${2118 + i * 10} 1258V1269M${2118 + i * 10} 1274V1278`} stroke="#bdbdbd" />
      ))}
      <path d="M2214 1253H2325V1258H2214ZM2337 1253H2426V1258H2337ZM2214 1269H2325V1274H2214ZM2337 1269H2426V1274H2337Z" />
      <path d="M2107 1253H2209V1258H2107ZM2107 1269H2209V1274H2107Z" fill="#9c9c9c" stroke="#9c9c9c" />
      <Hexagon x={2091} y={1256} w={8} h={7} />
      <Hexagon x={2091} y={1271} w={8} h={7} />
      <T x={2091} y={1256} s={6}>G1</T>
      <T x={2091} y={1271} s={6}>G2</T>
      {([[2109, "A1"], [2209, "P1"], [2331, "P2"], [2431, "A2"]] as [number, string][]).map(([x, t]) => (
        <g key={t}>
          <path d={`M${x} 1280l3 6h-6z`} fill="#9c9c9c" stroke="none" />
          <T x={x} y={1290} s={6}>
            {t}
          </T>
        </g>
      ))}
      <T x={2434} y={1260} s={6} a="start">신평동방면</T>

      {/* title block */}
      <path d="M1312 1381H2607" stroke="#c3c3c3" strokeWidth="3" />
      <path d="M1507 1381V1439M1767 1381V1439M2265 1381V1439" stroke="#bdbdbd" strokeWidth="2" />
      <path d="M1564 1381V1439M1507 1400H1767M1507 1420H1767M1312 1413H1507M1637 1420V1439M1694 1420V1439M2314 1381V1439M2428 1381V1439M2477 1381V1439M2265 1400H2428M2265 1420H2607" stroke="#cfcfcf" />
      <path d="M1816 1381V1439M1873 1381V1439M2069 1381V1439M2134 1381V1439M2200 1381V1439M1767 1392H2265M1767 1403H2265M1767 1416H2265M1767 1427H2265" stroke="#d6d6d6" />
      {[1387, 1398, 1410, 1421].map((y) => (
        <path key={y} d={`M1791 ${y - 4}l5 8h-10z`} stroke="#c9c9c9" />
      ))}
      {([
        [1535, 1391, "사 업 명"], [1535, 1410, "시설/공구"], [1535, 1429, "건설분야"], [1665, 1429, "건설단계"],
        [2290, 1391, "위치정보"], [2290, 1410, "축    척"], [2290, 1429, "도면번호"], [2452, 1401, "도 면 명"], [2452, 1429, "편철번호"],
      ] as [number, number, string][]).map(([x, y, t]) => (
        <T key={t} x={x} y={y} s={11} c="#b0b0b0">
          {t}
        </T>
      ))}
      {([
        [1791, "개정번호"], [1845, "날짜"], [1971, "개 정 내 용"], [2100, "과업책임인"], [2165, "분야별책임인"], [2230, "설계인"],
      ] as [number, string][]).map(([x, t]) => (
        <T key={t} x={x} y={1433} s={7} c="#b3b3b3">
          {t}
        </T>
      ))}
      <T x={1441} y={1444} s={5} c="#c9c9c9" a="start">CL.DATOPA.CTDATE CL.DNAME CL.DEPTID.PERSON CL.EMAIL</T>
      <T x={1622} y={1444} s={5} c="#c9c9c9" a="start">
        {"CL.ENAME   CL.ADDR   CL.TEL   CL.FAX   CL.HPADDR  CL.CODE  CL.DEPT CL.PERSON  CL.EMAIL CL.PROLE  CL.DANKODE  DU.DATE1  DU.LDATE  DU.PCLASS  DU.MCLASS  DU.KCLASS  DU.ECLASS  DU.FNAME  DC.DNAME  DC.ANAME   FU.CODE   FU.CLASS   FU.CODE1   FU.CODE2"}
      </T>
      <path d="M2477 1439V1452H2607V1439M2528 1439V1452" stroke="#cfcfcf" />
      <T x={2502} y={1447} s={7} c="#b3b3b3">적용표준</T>
      <T x={2567} y={1447} s={7} c="#b3b3b3">DA.STDNAME</T>
    </svg>
  );
}

/* ------------------------------------------------------------------ */
/* Overlays on the preview                                             */
/* ------------------------------------------------------------------ */

function FloatingPanel() {
  return (
    <div className="absolute top-[342px] left-[332px] flex h-[241px] w-[536px] bg-[linear-gradient(90deg,#352c1d_0%,#3a3121_15%,#463b2a_33%,#423925_44%,#2d281a_62%,#1f1a0f_84%,#1f1a10_93%,#2e2416_100%)] py-[9px] text-xl">
      <div className="flex-1 pl-[14px]">
        {ACTIONS.map((a) => (
          <button key={a.kind} type="button" className="flex h-14 items-center gap-4 font-bold text-[#ece9e0]">
            <ActionIcon kind={a.kind} className="h-9 w-[39px]" />
            {a.label}
          </button>
        ))}
      </div>
      <div className="w-[195px] text-[#c9c4b8]">
        <div className="flex h-14 items-center gap-4 pl-1">
          <CheckField boxClass="h-5 w-5" textClass="pl-1" label="전체출력" />
          <span className="text-lg font-bold text-white">5 / 5</span>
        </div>
        <div className="mt-[29px] h-[2px] bg-[#3b3527]" />
        <div className="mt-[22px] flex h-14 items-center pl-1">
          <CheckField boxClass="h-5 w-5" textClass="pl-1" label="용지 맞춤" />
        </div>
        <p className="pl-[38px] text-[19px] leading-4 font-bold whitespace-pre text-[#7a7466]">
          S= 1 :{" "}
          <span className="text-[#b04a45]">199.98</span>
        </p>
      </div>
    </div>
  );
}

function Magnifier() {
  return (
    <div className="absolute bottom-px left-[92px] z-10 h-[194px] w-[267px] bg-[#000d1b] text-xl leading-7 text-[#dfe6ee]">
      <svg viewBox="0 0 267 194" className="absolute inset-0 h-full w-full" fill="none" aria-hidden="true">
        <defs>
          <pattern id="lensHatch" width="7" height="7" patternUnits="userSpaceOnUse">
            <path d="M-1 8L8 -1M-1 1L1 -1M6 8L8 6" stroke="#a3a3a3" strokeWidth="1.200" />
          </pattern>
        </defs>
        <path d="M93 5H262V99H93Z" fill="#fff" />
        <path d="M93 5H111V81H262V99H93Z" fill="url(#lensHatch)" />
        <path d="M136 42H262" stroke="#aaa" strokeWidth="3" />
        <path d="M136 5V65H262" stroke="#111" strokeWidth="3" />
        <path d="M0 0H267V194H0ZM6 6V188H261V6Z" fill="#000" fillRule="evenodd" />
        <rect x="3" y="3" width="261" height="188" stroke="#f80808" strokeWidth="2" strokeDasharray="7 3" />
        <g stroke="#cfd8e2" strokeWidth="1.500" fill="#cfd8e2">
          <path d="M74 63V78M66 82H83M66 98H83M74 102V116" />
          <path d="M74 80L69 72H79ZM74 99L69 107H79Z" />
          <path d="M78 118H90M94 110V127M111 110V127M115 118H130" />
          <path d="M93 118L85 113V123ZM112 118L120 113V123Z" />
        </g>
      </svg>
      <div className="relative flex gap-[9px] pt-[36px] pl-[31px]">
        <span className="font-medium text-[#fb0d0d]">-5</span>
        <span>mm</span>
      </div>
      <div className="relative mt-[41px] flex justify-end gap-[10px] pr-4">
        <span className="font-medium text-[#fb0d0d]">-4.85</span>
        <span>mm</span>
      </div>
      <div className="relative mt-1 flex justify-end gap-[2px] pr-4">
        <label className="flex h-7 w-[75px] justify-end border border-[#1ba1e2] bg-white pr-1">
          <input aria-label="여백" defaultValue="−4.85" className="my-[2px] h-[22px] w-[58px] bg-[#99c9ef] text-right text-xl text-black" />
        </label>
        <button type="button" className="h-7 w-[76px] border-2 border-white bg-[#191970] text-lg leading-[22px] text-white">
          Center
        </button>
      </div>
    </div>
  );
}

function Preview() {
  return (
    <section className="relative flex min-w-0 flex-1 flex-col rounded-tl-lg rounded-r-lg border-t-2 border-b border-t-[#bdbab2] border-b-[#26241f] bg-[#a3a3a3] shadow-[2px_0_0_#f3efea]">
      <div className="absolute -top-[2px] right-[937px] flex h-[2px] w-[270px]">
        <span className="w-[54px] bg-[#a3b8c4]" />
        <span className="flex-1 bg-[#eeeae3]" />
      </div>
      <button type="button" aria-label="닫기" className="absolute top-[14px] right-[18px] text-[#dedede]">
        <X className="h-[18px] w-[18px]" strokeWidth={2} />
      </button>

      <div className="relative h-[82px] pt-[26px] pr-[170px] pl-[169px]">
        <div className="relative z-10 flex justify-center pl-10">
          <div className="w-[116px]">
            <div className="h-[58px] bg-[#000d1b] text-center text-xl leading-[50px] text-[#e6edf5]">421 mm</div>
            <svg width="116" height="18" viewBox="0 0 116 18" className="block" aria-hidden="true">
              <defs>
                <pattern id="labelHatch" width="7" height="7" patternUnits="userSpaceOnUse">
                  <path d="M-1 8L8 -1M-1 1L1 -1M6 8L8 6" stroke="#a8a8a8" strokeWidth="1.200" />
                </pattern>
              </defs>
              <rect width="116" height="18" fill="#fff" />
              <rect width="116" height="18" fill="url(#labelHatch)" />
            </svg>
          </div>
        </div>
        <div className="absolute inset-x-0 top-[57px] z-10 flex h-4 items-center pr-[170px] pl-[169px] text-[#e9e9e9]">
          <svg width="10" height="16" viewBox="0 0 10 16" fill="currentColor" aria-hidden="true">
            <path d="M0 0H1V16H0ZM1 8L9 3V13Z" />
          </svg>
          <div className="h-[2px] flex-1 bg-[#cacaca]" />
          <svg width="10" height="16" viewBox="0 0 10 16" fill="currentColor" aria-hidden="true">
            <path d="M9 0H10V16H9ZM9 8L1 3V13Z" />
          </svg>
        </div>
      </div>

      <div className="flex pl-[169px]">
        <div className="relative min-w-0 flex-1">
          <Sheet />
          <FloatingPanel />
        </div>
        <div className="relative w-[170px]">
          <div className="flex h-full items-center">
            <div className="-ml-px mt-[14px] h-12 w-[125px] bg-[#000d1b] pl-9 text-xl leading-[50px] text-[#e6edf5]">297 mm</div>
          </div>
          <div className="absolute inset-y-0 left-2 flex w-4 flex-col items-center text-[#e9e9e9]">
            <svg width="16" height="10" viewBox="0 0 16 10" fill="currentColor" aria-hidden="true">
              <path d="M0 0H16V1H0ZM8 1L3 9H13Z" />
            </svg>
            <div className="w-[2px] flex-1 bg-[#cacaca]" />
            <svg width="16" height="10" viewBox="0 0 16 10" fill="currentColor" aria-hidden="true">
              <path d="M0 9H16V10H0ZM8 9L3 1H13Z" />
            </svg>
          </div>
        </div>
      </div>

      <div className="flex h-20 justify-center pt-px pl-8">
        <nav className="flex h-[74px] w-52 items-center justify-between bg-[#000d1b] px-[14px] text-xl text-[#e6edf5]">
          <button type="button" aria-label="이전" className="grid h-[42px] w-[42px] place-items-center rounded-full bg-white text-[#444]">
            <ChevronLeft className="h-6 w-6" />
          </button>
          <p className="whitespace-pre">
            <span className="font-medium text-[#ef5c66]">1</span>
            {"  /   3"}
          </p>
          <button type="button" aria-label="다음" className="grid h-[42px] w-[42px] place-items-center rounded-full bg-white text-[#444]">
            <ChevronRight className="h-6 w-6" />
          </button>
        </nav>
      </div>

      <Magnifier />
    </section>
  );
}

export default function App() {
  return (
    <div className="min-h-screen bg-[#ede8e1] pt-[408px] pr-[70px] pb-20 pl-[683px] font-['Noto_Sans','Noto_Sans_CJK_KR',sans-serif]">
      <main className="flex items-stretch rounded-bl-lg bg-[linear-gradient(90deg,#2b2214_400px,transparent_400px)]">
        <Sidebar />
        <Preview />
      </main>
    </div>
  );
}
